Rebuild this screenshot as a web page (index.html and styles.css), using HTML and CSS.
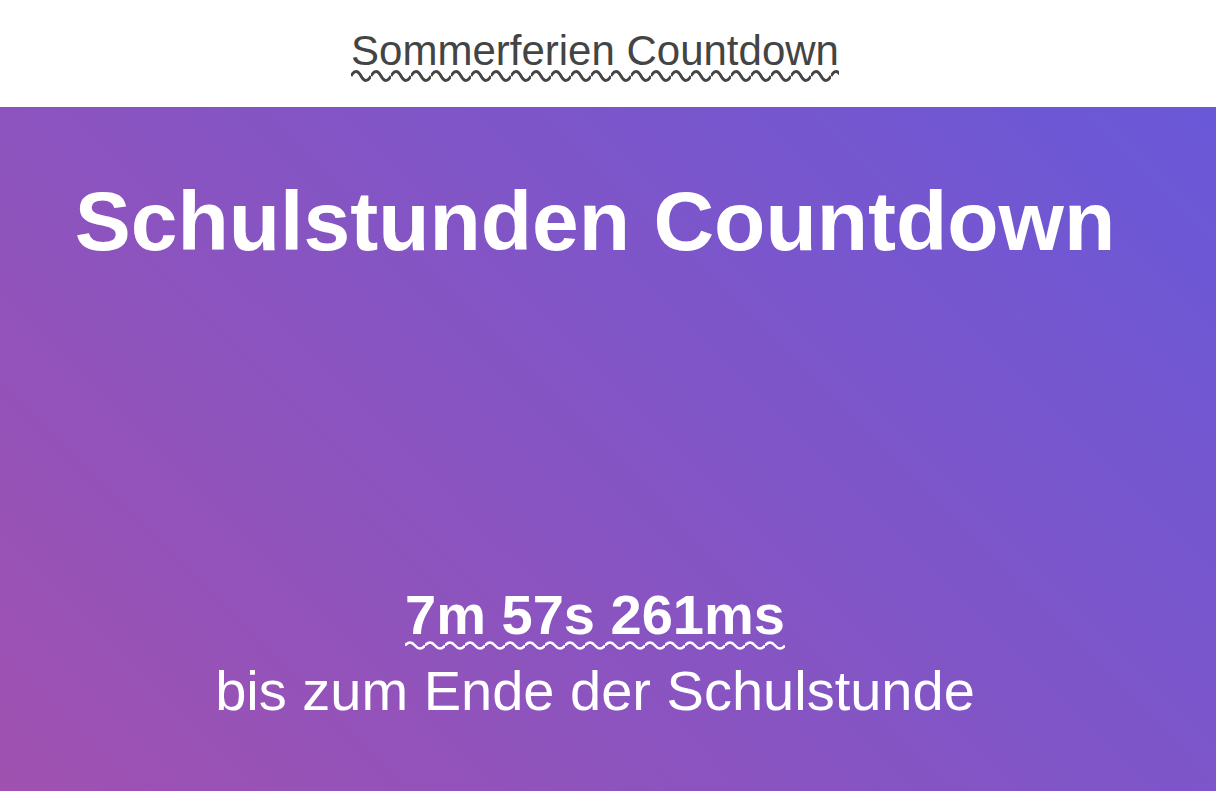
FILE: index.html
```html
<!DOCTYPE html>
<html lang="de">
<head>
<meta charset="utf-8">
<title>Schulstunden Countdown</title>
<link rel="stylesheet" href="styles.css">
</head>
<body>
  <header class="topbar">
    <a class="topbar__link" href="#">Sommerferien Countdown</a>
  </header>
  <main class="hero">
    <h1 class="hero__title">Schulstunden Countdown</h1>
    <div class="hero__countdown">
      <a class="hero__time" href="#">7m 57s 261ms</a>
      <div class="hero__label">bis zum Ende der Schulstunde</div>
    </div>
  </main>
</body>
</html>
```

FILE: styles.css
```css
html, body {
  margin: 0;
  padding: 0;
  height: 100%;
}

body {
  font-family: "Liberation Sans", Arial, sans-serif;
  display: flex;
  flex-direction: column;
  overflow: hidden;
}

.topbar {
  height: 107px;
  flex: none;
  background: #ffffff;
  display: flex;
  justify-content: center;
  align-items: flex-start;
  padding-right: 26px;
  padding-top: 27px;
  box-sizing: border-box;
}

.topbar__link {
  font-size: 42px;
  line-height: 48px;
  color: #444444;
  text-decoration: none;
  padding-bottom: 7px;
  background-image: url("data:image/svg+xml,%3Csvg xmlns='http://www.w3.org/2000/svg' width='20' height='12'%3E%3Cpath d='M0 6 Q5 -3 10 6 T20 6' fill='none' stroke='%23444444' stroke-width='3'/%3E%3C/svg%3E");
  background-repeat: repeat-x;
  background-size: 20px 12px;
  background-position: left bottom;
}

.hero {
  flex: 1;
  display: flex;
  flex-direction: column;
  align-items: center;
  padding: 66px 26px 62px 0;
  background: linear-gradient(45deg, #a051b0 0%, #6958d8 100%);
  color: #ffffff;
}

.hero__title {
  margin: 0;
  font-size: 84px;
  font-weight: bold;
  line-height: 96px;
}

.hero__countdown {
  margin-top: auto;
  display: flex;
  flex-direction: column;
  align-items: center;
  font-size: 56px;
  line-height: 76px;
}

.hero__time {
  color: #ffffff;
  font-weight: bold;
  text-decoration: none;
  background-image: url("data:image/svg+xml,%3Csvg xmlns='http://www.w3.org/2000/svg' width='20' height='9'%3E%3Cpath d='M0 4.5 Q5 -1.5 10 4.5 T20 4.5' fill='none' stroke='%23ffffff' stroke-width='2.6'/%3E%3C/svg%3E");
  background-repeat: repeat-x;
  background-size: 20px 9px;
  background-position: left 0 bottom 3px;
}

.hero__label {
  font-weight: normal;
}
```
